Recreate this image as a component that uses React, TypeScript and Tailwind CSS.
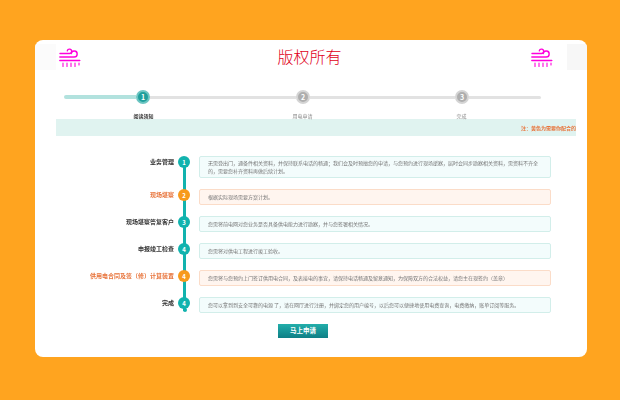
const cjk = "font-['Noto_Sans_CJK_SC','Liberation_Sans',sans-serif]";

function WindIcon() {
  return (
    <svg viewBox="0 0 22 20" width="22" height="20" fill="none" stroke="#ff00dd" strokeWidth="1.4" strokeLinecap="round">
      <path d="M1 5.5h9.5a2.2 2.2 0 1 0-2.2-2.6" />
      <path d="M0.8 9h14.4a3 3 0 1 0-3-3.4" />
      <path d="M0.8 12.5h20" />
      <path d="M4 15v3.5M8 15v3.5M12 15v3.5M16 15v3.5M20 15v2" strokeWidth="1.1" />
    </svg>
  );
}

const rows = [
  {
    label: "业务管理",
    n: "1",
    text: "无需登出门，通备件相关资料，并保持联系电话的畅通；我们会及时预擅您的申请，与您预约进行现场援察，届时会同步勘察相关资料，需资料不齐全的，需要您补齐资料再做后续计划。",
  },
  { label: "现场堪察", n: "2", orange: true, text: "根据实际现场需要方案计划。" },
  { label: "现场堪察答复客户", n: "3", text: "您需将前电网对您业务是否具备供电能力进行勘察，并与您签署相关情况。" },
  { label: "申报竣工检查", n: "4", text: "您需将对供电工程进行竣工验收。" },
  {
    label: "供用电合同及签（修）计算装置",
    n: "4",
    orange: true,
    text: "您需将与您预约上门签订供用电合同，及表接电的事宜，请保持电话畅通及留意通知，为保障双方的合法权益，请您主在现签约（盖章）",
  },
  {
    label: "完成",
    n: "4",
    text: "您可以拿到到安全可靠的电源 了，请在网厅进行注册，并绑定您的用户编号，以后您可以便捷地使用电费查询，电费缴纳，账单订阅等服务。",
  },
];

function StepDot({ n, active }: { n: string; active?: boolean }) {
  return (
    <div
      className={
        active
          ? "w-[14px] h-[14px] shrink-0 rounded-full bg-[#1f9f9c] border-2 border-[#6cc5c2] text-white text-[7px] font-bold flex items-center justify-center"
          : "w-[14px] h-[14px] shrink-0 rounded-full bg-[#aeaeae] border-2 border-[#d4d4d4] text-white text-[7px] font-bold flex items-center justify-center"
      }
    >
      {n}
    </div>
  );
}

export default function App() {
  return (
    <div className={`w-[620px] h-[400px] bg-[#ffa41f] pl-[35px] pt-[40px] overflow-hidden ${cjk}`}>
      <div className="w-[552px] h-[317px] bg-white rounded-lg overflow-hidden flex flex-col">
        {/* header */}
        <div className="h-[32px] flex items-center">
          <div className="w-[21px] h-[26px] mt-[2px] bg-[#fbfbfb]" />
          <div className="ml-[3px] mt-[4px]"><WindIcon /></div>
          <div className="flex-1 text-center text-[16px] leading-[20px] font-light text-[#e00020] pl-[7px]">版权所有</div>
          <div className="mr-[14px] mt-[4px]"><WindIcon /></div>
          <div className="w-[20px] h-[26px] mt-[2px] bg-[#f7f7f7]" />
        </div>

        {/* steps */}
        <div className="ml-[29px] w-[477px] mt-[18px] flex items-center">
          <div className="w-[72px] h-[4px] bg-[#b2e2de] rounded-l-full" />
          <StepDot n="1" active />
          <div className="w-[146px] h-[3px] bg-[#e2e2e2]" />
          <StepDot n="2" />
          <div className="w-[145px] h-[3px] bg-[#e2e2e2]" />
          <StepDot n="3" />
          <div className="flex-1 h-[3px] bg-[#e2e2e2] rounded-r-full" />
        </div>
        <div className="ml-[29px] w-[477px] mt-[8px] grid grid-cols-3 text-center text-[5px] leading-[7px] blur-[0.2px]">
          <div className="font-bold text-[#333333]">阅读须知</div>
          <div className="text-[#888888]">用电申请</div>
          <div className="text-[#888888]">完成</div>
        </div>

        {/* notice band */}
        <div className="ml-[21px] w-[520px] h-[17px] bg-[#e0f3f0] flex items-center justify-end whitespace-nowrap">
          <span className="text-[5px] font-bold text-[#e8743b] blur-[0.2px]">注：黄色为需要你配合的</span>
        </div>

        {/* timeline */}
        <div className="relative mt-[20px] flex flex-col gap-[11px]">
          <div className="absolute left-[148px] top-[6px] w-[3px] h-[149px] bg-[#12b3ae]" />
          <div className="absolute left-[147.5px] top-[152px] w-[4px] h-[4px] rounded-full bg-[#12b3ae]" />
          {rows.map((r, i) => (
            <div key={i} className="relative flex items-start">
              <div
                className={
                  r.orange
                    ? "w-[139px] text-right text-[6px] leading-[12px] font-bold text-[#e8743b] whitespace-nowrap blur-[0.2px]"
                    : "w-[139px] text-right text-[6px] leading-[12px] font-bold text-[#333333] whitespace-nowrap blur-[0.2px]"
                }
              >
                {r.label}
              </div>
              <div
                className={
                  r.orange
                    ? "ml-[4px] w-[12px] h-[12px] shrink-0 rounded-full bg-[#f79a1c] text-white text-[6px] font-bold flex items-center justify-center"
                    : "ml-[4px] w-[12px] h-[12px] shrink-0 rounded-full bg-[#12b3ae] text-white text-[6px] font-bold flex items-center justify-center"
                }
              >
                {r.n}
              </div>
              <div
                className={
                  r.orange
                    ? "ml-[9px] w-[352px] rounded-[2px] border border-[#fbdcc8] bg-[#fff5ef] px-[8px] py-[3px] text-[5px] leading-[8px] text-[#777777]"
                    : i === 0
                    ? "ml-[9px] w-[352px] rounded-[2px] border border-[#d2eeea] bg-[#f3fcfc] px-[8px] py-[2px] text-[5px] leading-[8px] text-[#777777]"
                    : "ml-[9px] w-[352px] rounded-[2px] border border-[#d2eeea] bg-[#f3fcfc] px-[8px] py-[3px] text-[5px] leading-[8px] text-[#777777]"
                }
              >
                <div className="blur-[0.2px]">{r.text}</div>
              </div>
            </div>
          ))}
        </div>

        {/* button */}
        <div className="ml-[243px] mt-[11px] w-[50px] h-[14px] bg-gradient-to-b from-[#22aeaa] to-[#0e7f86] text-white text-[6.5px] font-bold flex items-center justify-center">
          马上申请
        </div>
      </div>
    </div>
  );
}
